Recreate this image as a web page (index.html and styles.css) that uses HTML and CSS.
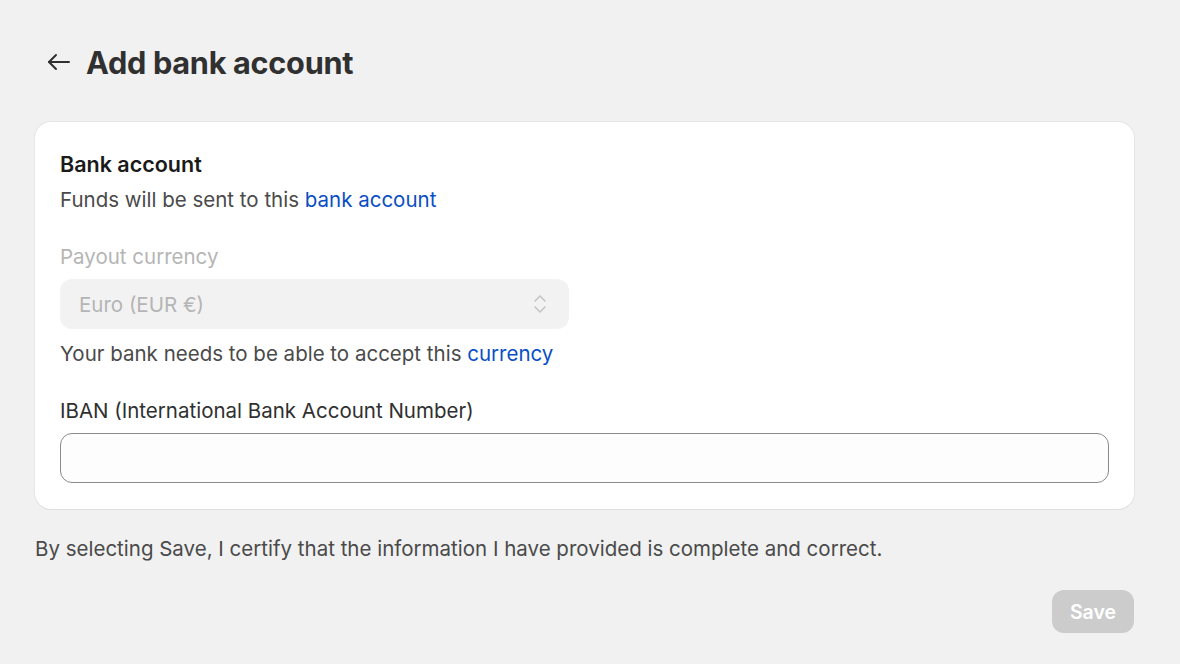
FILE: index.html
```html
<!DOCTYPE html>
<html lang="en">
<head>
    <meta charset="UTF-8">
    <meta name="viewport" content="width=device-width, initial-scale=1.0">
    <title>Add bank account</title>
    <link rel="stylesheet" href="styles.css">
</head>
<body>
    <div class="page">
        <div class="page-header">
            <button class="back" type="button" aria-label="Back">
                <svg width="26" height="26" viewBox="0 0 26 26" fill="none" stroke="#303030" stroke-width="2" stroke-linecap="round" stroke-linejoin="round">
                    <path d="M23 13H3"/>
                    <path d="M10 6l-7 7 7 7"/>
                </svg>
            </button>
            <h1>Add bank account</h1>
        </div>

        <div class="card">
            <h2>Bank account</h2>
            <p class="subdued">Funds will be sent to this <a href="#">bank account</a></p>

            <div class="field">
                <label class="label disabled">Payout currency</label>
                <div class="select">
                    <span>Euro (EUR €)</span>
                    <svg width="18" height="24" viewBox="0 0 18 24" fill="none" stroke="#c4c4c4" stroke-width="1.6" stroke-linecap="round" stroke-linejoin="round">
                        <path d="M4 9l5-5 5 5"/>
                        <path d="M4 15l5 5 5-5"/>
                    </svg>
                </div>
                <p class="help">Your bank needs to be able to accept this <a href="#">currency</a></p>
            </div>

            <div class="field">
                <label class="label" for="iban">IBAN (International Bank Account Number)</label>
                <input class="input" id="iban" type="text">
            </div>
        </div>

        <p class="note">By selecting Save, I certify that the information I have provided is complete and correct.</p>

        <div class="actions">
            <button class="save" type="button" disabled>Save</button>
        </div>
    </div>
</body>
</html>
```

FILE: styles.css
```css
body {
    margin: 0;
    background-color: #f1f1f1;
    font-family: Inter, "Noto Sans", sans-serif;
    color: #303030;
}

.page {
    padding: 40px 46px 30px 35px;
}

.page-header {
    display: flex;
    align-items: center;
    gap: 12px;
    height: 44px;
    margin-bottom: 38px;
}

.back {
    display: flex;
    align-items: center;
    justify-content: center;
    width: 30px;
    height: 30px;
    margin-left: 9px;
    padding: 0;
    border: none;
    background: none;
}

h1 {
    margin: 0;
    font-size: 30.7px;
    font-weight: 700;
    letter-spacing: -0.3px;
    color: #303030;
}

.card {
    background-color: #fff;
    border-radius: 16px;
    padding: 27px 25px 26px 25px;
    box-shadow: 0 1px 0 #dedede, 0 0 0 1px #e6e6e6;
}

h2 {
    margin: 0;
    font-size: 21.5px;
    font-weight: 600;
    line-height: 30px;
    color: #1a1a1a;
}

p {
    margin: 0;
}

.subdued {
    margin-top: 6px;
    font-size: 20.5px;
    line-height: 30px;
    color: #4a4a4a;
}

a {
    color: #0a4ec4;
    text-decoration: none;
}

.field {
    margin-top: 27px;
}

.field + .field {
    margin-top: 27px;
}

.label {
    display: block;
    font-size: 20.5px;
    line-height: 30px;
    color: #303030;
}

.label.disabled {
    color: #b5b5b5;
}

.select {
    display: flex;
    align-items: center;
    justify-content: space-between;
    width: 509px;
    height: 50px;
    margin-top: 7px;
    padding: 0 20px 0 19px;
    box-sizing: border-box;
    border-radius: 12px;
    background-color: #f2f2f2;
    font-size: 20.5px;
    color: #b5b5b5;
}

.help {
    margin-top: 10px;
    font-size: 20.5px;
    line-height: 30px;
    color: #4a4a4a;
}

.input {
    display: block;
    width: 100%;
    height: 50px;
    margin-top: 7px;
    box-sizing: border-box;
    border: 1px solid #8a8a8a;
    border-radius: 12px;
    background-color: #fdfdfd;
    font-family: inherit;
    font-size: 20.5px;
}

.note {
    margin-top: 25px;
    font-size: 20.5px;
    line-height: 30px;
    color: #4a4a4a;
}

.actions {
    display: flex;
    justify-content: flex-end;
    margin-top: 26px;
}

.save {
    width: 82px;
    height: 43px;
    border: none;
    border-radius: 12px;
    background-color: #cccccc;
    color: #fff;
    font-family: inherit;
    font-size: 19.5px;
    font-weight: 600;
}
```
